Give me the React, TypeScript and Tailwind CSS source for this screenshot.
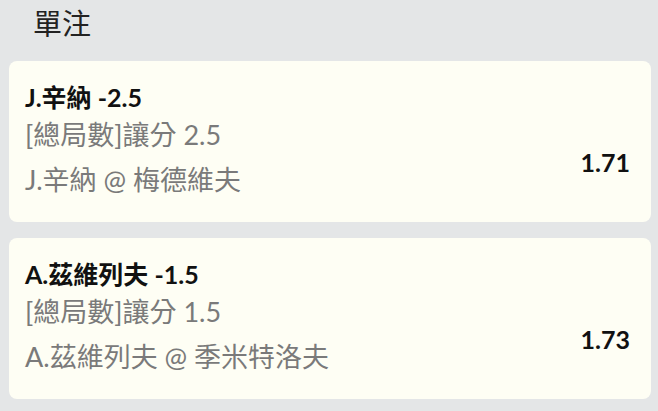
const bets = [
  {
    title: "J.辛納 -2.5",
    market: "[總局數]讓分 2.5",
    match: "J.辛納 @ 梅德維夫",
    odds: "1.71",
  },
  {
    title: "A.茲維列夫 -1.5",
    market: "[總局數]讓分 1.5",
    match: "A.茲維列夫 @ 季米特洛夫",
    odds: "1.73",
  },
];

const font = { fontFamily: 'Lato, "Noto Sans CJK TC", sans-serif' };

export default function App() {
  return (
    <div className="h-[411px] w-[658px] overflow-hidden bg-[#e4e6e7]" style={font}>
      <h1 className="pl-[33px] pt-[6px] text-[29px] leading-[36px] text-[#222]">單注</h1>
      <div className="mt-[19px] flex flex-col gap-[16px] pl-[9px] pr-[7px]">
        {bets.map((b) => (
          <div
            key={b.title}
            className="flex h-[161px] items-start justify-between rounded-[8px] bg-[#fefef4] pl-[16px] pr-[21px] pt-[21px]"
          >
            <div className="flex flex-col">
              <div className="text-[25px] font-bold leading-[30px] text-[#111]">{b.title}</div>
              <div className="mt-[5px] text-[27px] leading-[36px] text-[#7a7a7a]">{b.market}</div>
              <div className="mt-[9px] text-[27px] leading-[36px] text-[#7a7a7a]">{b.match}</div>
            </div>
            <div className="mt-[65px] text-[25px] font-bold leading-[30px] text-[#111]">{b.odds}</div>
          </div>
        ))}
      </div>
    </div>
  );
}
